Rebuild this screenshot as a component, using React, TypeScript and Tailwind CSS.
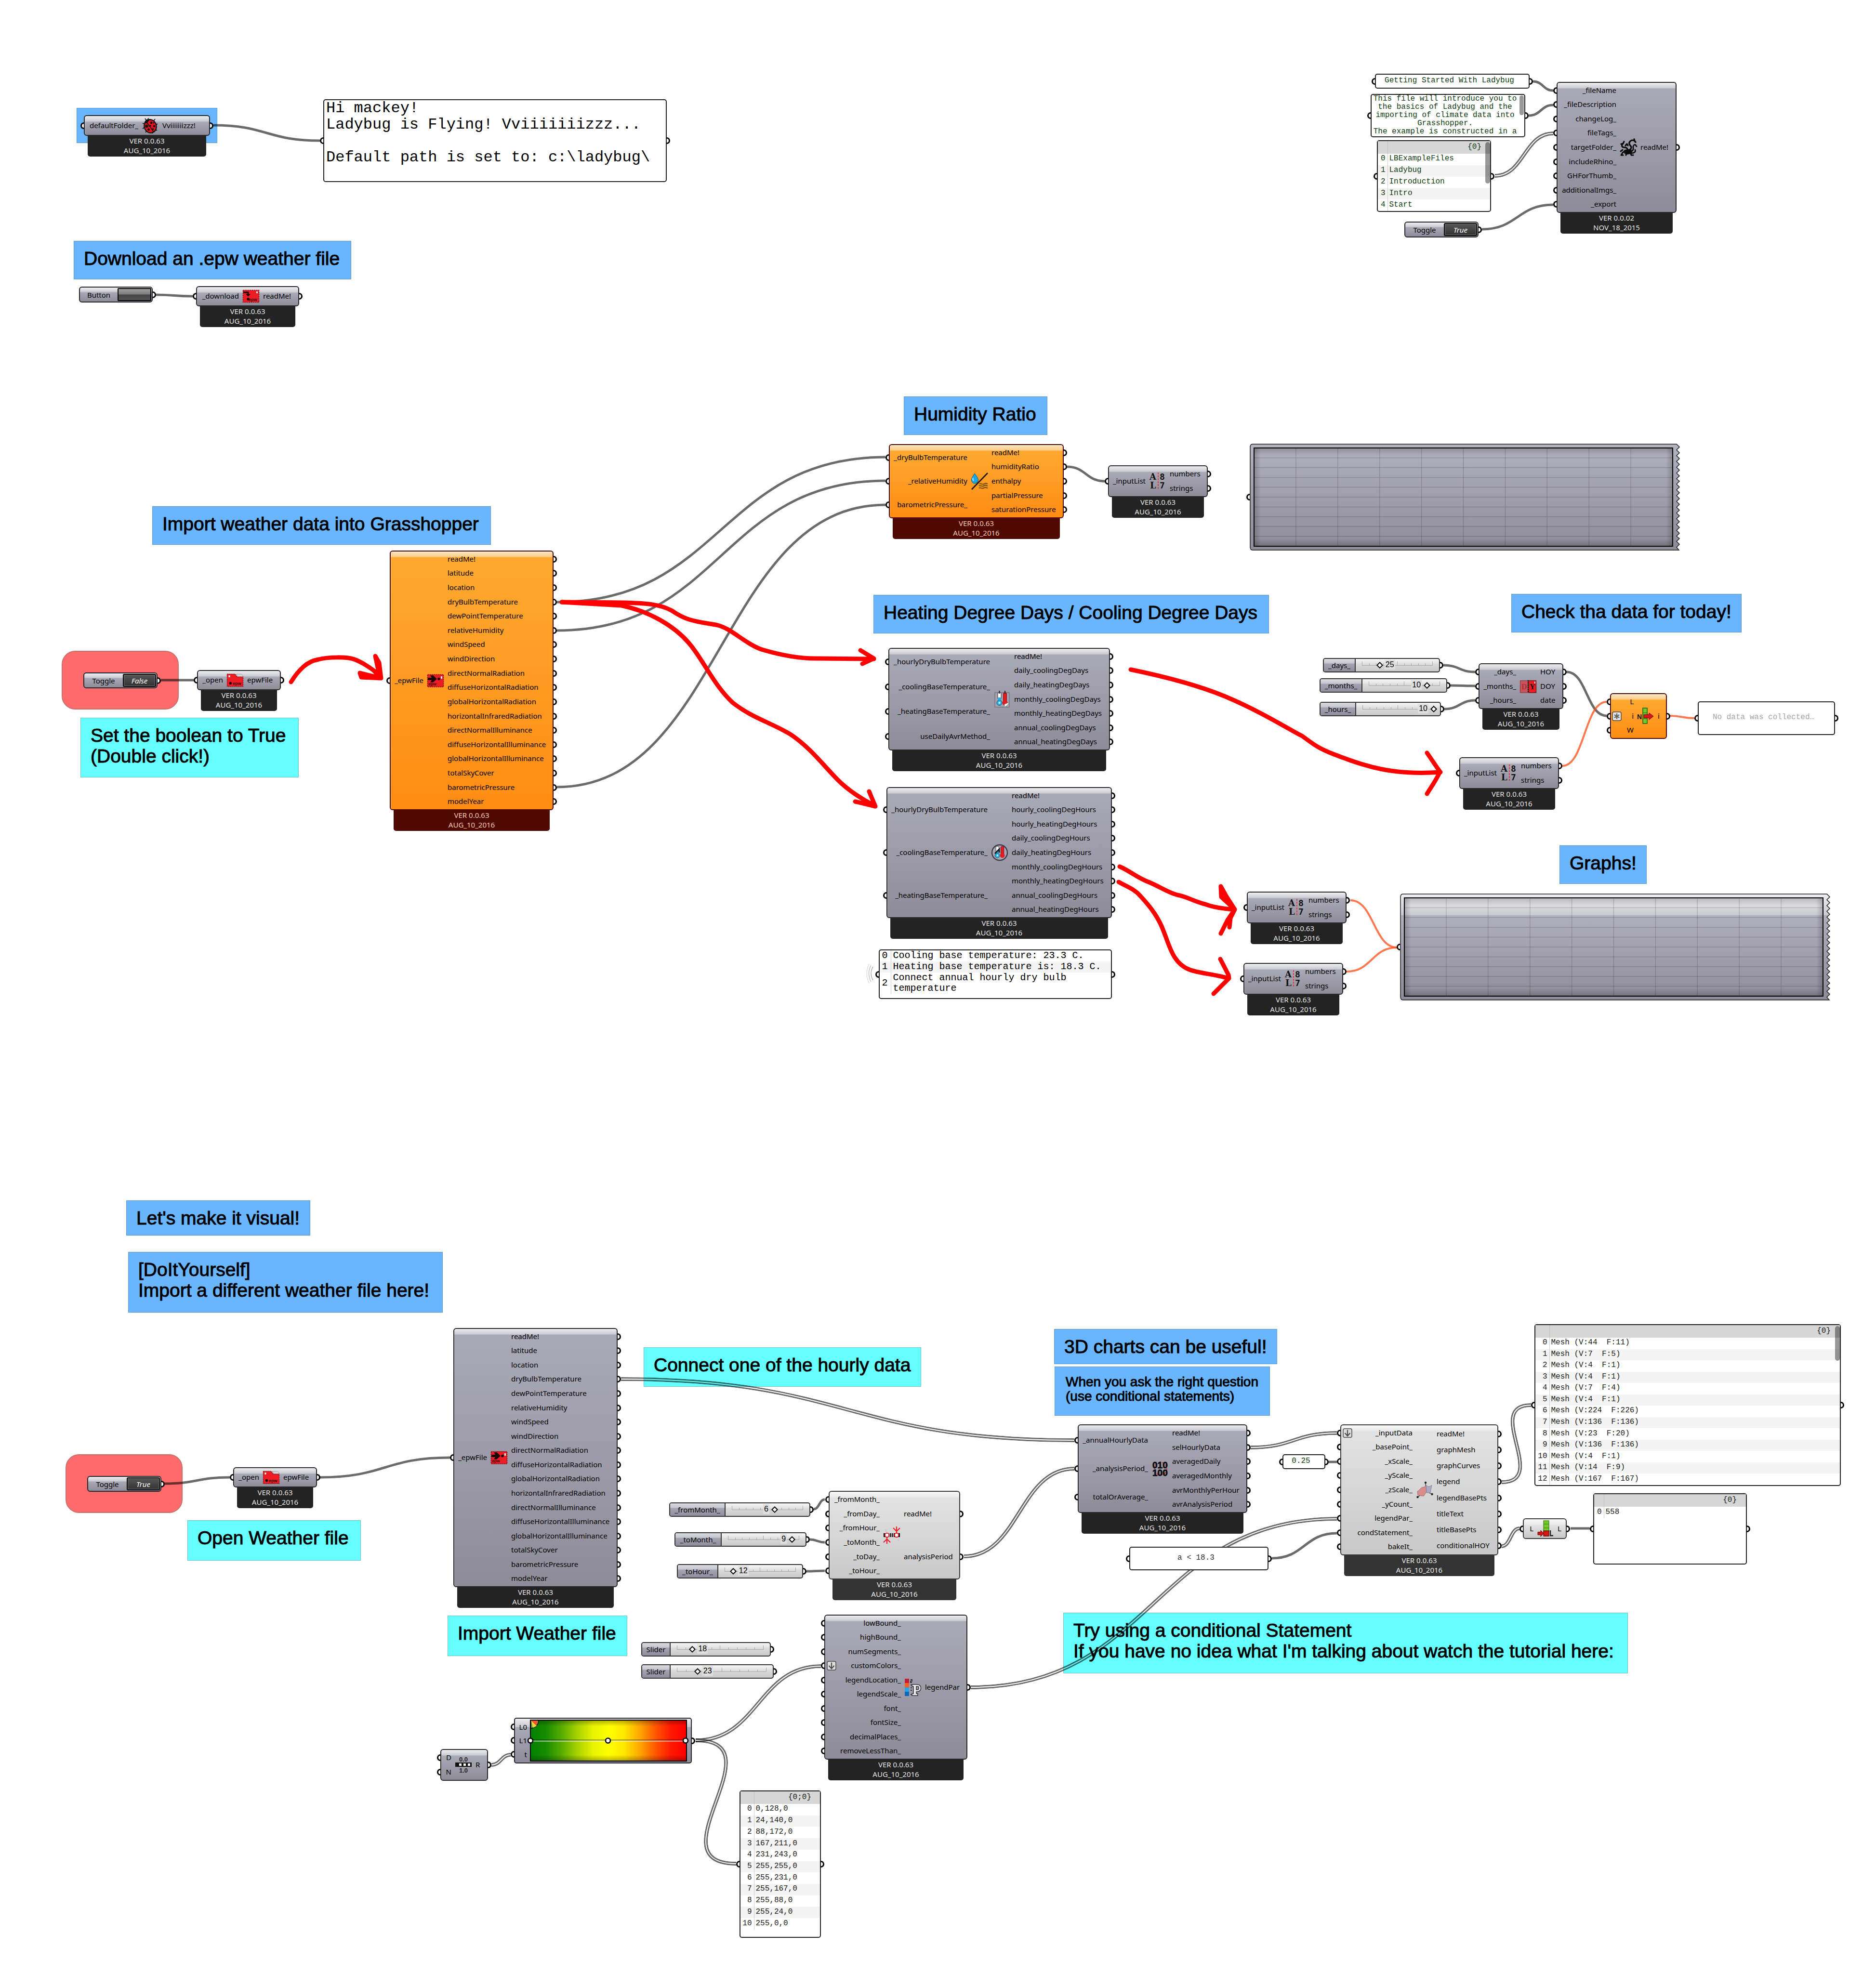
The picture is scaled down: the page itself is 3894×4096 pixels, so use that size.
import React from "react";

type Tone = "grey" | "orange" | "light";

const bodyTone: Record<Tone, string> = {
  grey: "border-[#26262b] bg-[linear-gradient(180deg,#ececf0_0px,#cacad2_11px,#aaa9b7_12px,#8e8c99_100%)]",
  orange: "border-[#4f0900] bg-[linear-gradient(180deg,#ffe6c4_0px,#ffcc85_11px,#ffa930_12px,#ff8c14_100%)]",
  light: "border-[#3a3a3a] bg-[linear-gradient(180deg,#fafafa_0px,#e9e9e9_11px,#e3e3e3_12px,#c8c8c8_100%)]",
};

const tagTone: Record<Tone, string> = {
  grey: "bg-[#232323] text-[#e6e6e6]",
  orange: "bg-[#4f0900] text-[#f6c9b4]",
  light: "bg-[#333333] text-[#ececec]",
};

const leftPort =
  "absolute -left-[9px] top-1/2 -mt-[7px] h-[14px] w-[7px] rounded-l-full border-[3px] border-r-0 border-black bg-white";
const rightPort =
  "absolute -right-[9px] top-1/2 -mt-[7px] h-[14px] w-[7px] rounded-r-full border-[3px] border-l-0 border-black bg-white";

function DownBadge() {
  return (
    <svg viewBox="0 0 20 20" className="absolute left-[3px] size-5" aria-hidden="true">
      <rect x="1" y="1" width="18" height="18" rx="3" fill="#dcdcdc" stroke="#4a4a4a" strokeWidth="1.5" />
      <path d="M10 3.5V16M4.5 10L10 16L15.5 10" fill="none" stroke="#4d4d4d" strokeWidth="2.2" />
    </svg>
  );
}

function StarBadge() {
  return (
    <svg viewBox="0 0 20 20" className="absolute left-[2px] size-5" aria-hidden="true">
      <rect x="1" y="1" width="18" height="18" rx="3" fill="#e4e4e4" stroke="#4a4a4a" strokeWidth="1.5" />
      <path d="M10 4V16M4.800 7L15.200 13M4.800 13L15.200 7" stroke="#666" strokeWidth="2.4" />
    </svg>
  );
}

type NodeProps = {
  place: string;
  body: string;
  inWidth: string;
  tone?: Tone;
  inputs: string[];
  outputs: string[];
  icon: React.ReactNode;
  tag?: [string, string] | null;
  badge?: { at: string; el: React.ReactNode };
};

function Node({ place, body, inWidth, tone = "grey", inputs, outputs, icon, tag = ["VER 0.0.63", "AUG_10_2016"], badge }: NodeProps) {
  return (
    <section className={`absolute font-['Noto_Sans',sans-serif] text-[15px] leading-5 text-black ${place}`}>
      <div
        className={`relative flex rounded-[6px] border-2 py-px shadow-[inset_0_1px_0_rgba(255,255,255,0.8),inset_1px_0_0_rgba(255,255,255,0.25)] ${bodyTone[tone]} ${body}`}
      >
        <ul className={`flex shrink-0 flex-col ${inWidth}`}>
          {inputs.map((t) => (
            <li key={t} className="relative flex flex-1 items-center justify-end whitespace-nowrap">
              <span className={leftPort} />
              {badge && badge.at === t ? badge.el : null}
              <span className="pb-0.5">{t}</span>
            </li>
          ))}
        </ul>
        <div className="mx-[7px] flex w-9 shrink-0 items-center justify-center">{icon}</div>
        <ul className="flex flex-1 flex-col">
          {outputs.map((t) => (
            <li key={t} className="relative flex flex-1 items-center whitespace-nowrap">
              <span className="pb-0.5">{t}</span>
              <span className={rightPort} />
            </li>
          ))}
        </ul>
      </div>
      {tag && (
        <footer className={`mx-2 rounded-b-[5px] pb-[3px] text-center leading-[20px] ${tagTone[tone]}`}>
          <div>{tag[0]}</div>
          <div>{tag[1]}</div>
        </footer>
      )}
    </section>
  );
}

const noteTone = {
  blue: "bg-[#69b6ff] border-[#5a9bd8]",
  cyan: "bg-[#66ffff] border-[#74c4c4]",
};

function Note({ place, tone, lines }: { place: string; tone: "blue" | "cyan"; lines: string[] }) {
  return (
    <div
      className={`absolute whitespace-nowrap border px-5 pt-[14px] font-['Liberation_Sans',Arial,sans-serif] text-[39px] leading-[43px] text-black [-webkit-text-stroke:1px_#000] ${noteTone[tone]} ${place}`}
    >
      {lines.map((l) => (
        <p key={l}>{l}</p>
      ))}
    </div>
  );
}

const panelBox = "absolute rounded-[5px] border-2 border-[#222] bg-white font-['Liberation_Mono',monospace]";

function Panel({ place, children }: { place: string; children: React.ReactNode }) {
  return (
    <div className={`${panelBox} ${place}`}>
      <span className={leftPort} />
      <span className={rightPort} />
      {children}
    </div>
  );
}

function ListPanel({
  place,
  path,
  rows,
  table,
  idx,
  head,
  scroll,
}: {
  place: string;
  path: string;
  rows: string[];
  table: string;
  idx: string;
  head: string;
  scroll?: string;
}) {
  return (
    <Panel place={place}>
      <table className={`w-full border-collapse text-[16px] leading-5 ${table}`}>
        <thead>
          <tr className="h-[26px] bg-[#d6d6d6]">
            <th className={`border-r border-[#bfbfbf] ${idx}`} />
            <th className={`pb-[3px] text-right font-normal ${head}`}>{path}</th>
          </tr>
        </thead>
        <tbody>
          {rows.map((r, i) => (
            <tr key={i} className="even:bg-[#f4f4f4]">
              <td className={`border-r border-[#cfcfcf] pb-[3px] pr-1 text-right ${idx}`}>{i}</td>
              <td className="whitespace-pre pb-[3px] pl-[3px]">{r}</td>
            </tr>
          ))}
        </tbody>
      </table>
      {scroll && <span className={`absolute right-0 top-0.5 w-[10px] rounded-full bg-black/40 ${scroll}`} />}
    </Panel>
  );
}

const capsule =
  "absolute flex rounded-[6px] border-2 border-[#26262b] bg-[linear-gradient(180deg,#ececf0_0px,#cacad2_9px,#aaa9b7_10px,#8e8c99_100%)] font-['Noto_Sans',sans-serif] text-[15px] leading-5 text-black";

function Toggle({ place, value }: { place: string; value: string }) {
  return (
    <div className={`${capsule} h-[33px] w-[154px] ${place}`}>
      <span className="flex flex-1 items-center justify-center">Toggle</span>
      <button
        type="button"
        aria-label={`Toggle ${value}`}
        className="my-px mr-px w-[69px] rounded-[3px] border-2 border-black bg-[linear-gradient(180deg,#565656,#333)] text-center italic text-white shadow-[inset_0_0_0_1px_#777]"
      >
        {value}
      </button>
      <span className={rightPort} />
    </div>
  );
}

function Slider({
  place,
  name,
  nameWidth,
  value,
  max,
  min = 0,
}: {
  place: string;
  name: string;
  nameWidth: string;
  value: number;
  max: number;
  min?: number;
}) {
  const p = ((value - min) / (max - min)) * 100;
  return (
    <label
      className={`absolute flex h-[30px] rounded-[5px] border-2 border-[#333] bg-[linear-gradient(180deg,#f6f6f6_0px,#e4e4e4_9px,#dcdcdc_10px,#c9c9c9_100%)] font-['Noto_Sans',sans-serif] text-[15px] leading-5 text-black ${place}`}
    >
      <span
        className={`flex items-center justify-center rounded-l-[3px] border-r-2 border-[#333] bg-[linear-gradient(180deg,#dcdce2_0px,#c4c4cd_9px,#a5a4b2_10px,#908e9c_100%)] ${nameWidth}`}
      >
        {name}
      </span>
      <span className="relative mx-[13px] flex-1">
        <span className="absolute inset-x-0 top-[5px] flex h-[9px] justify-between border-b border-[#a6a6a6]">
          {Array.from({ length: 11 }, (_, i) => (
            <span key={i} className={i % 5 === 0 ? "w-px bg-[#a6a6a6]" : "mt-1 w-px bg-[#a6a6a6]"} />
          ))}
        </span>
        <span
          className={`absolute top-[2px] bg-[#dfdfdf] px-0.5 font-['Liberation_Sans',Arial,sans-serif] text-[16px] leading-5 ${
            p < 50 ? "translate-x-[10px]" : "-ml-[11px] -translate-x-full"
          }`}
          style={{ left: `${p}%` }}
        >
          {value}
        </span>
        <input
          type="range"
          min={min}
          max={max}
          defaultValue={value}
          aria-label={name}
          className="absolute -left-[5px] top-[7px] m-0 h-[11px] w-[calc(100%+10px)] appearance-none bg-transparent [&::-webkit-slider-thumb]:size-[10px] [&::-webkit-slider-thumb]:rotate-45 [&::-webkit-slider-thumb]:appearance-none [&::-webkit-slider-thumb]:border-2 [&::-webkit-slider-thumb]:border-black [&::-webkit-slider-thumb]:bg-white"
        />
      </span>
      <span className={rightPort} />
    </label>
  );
}

/* ---------- icons ---------- */

const iconBox = "size-9 overflow-visible";

function LadybugIcon() {
  return (
    <svg viewBox="0 0 36 36" className={iconBox} aria-hidden="true">
      <g stroke="#111" strokeWidth="1.6" fill="none">
        <path d="M10 7L7 3M13 5L14 2M5 14L2 13M5 22L2 24M10 29L8 32M22 32L23 34M29 26L32 28M30 16L33 14M25 8L28 4" />
      </g>
      <ellipse cx="18" cy="19" rx="12.500" ry="14" fill="#e8121b" stroke="#111" strokeWidth="2.200" transform="rotate(-18 18 19)" />
      <path d="M5.500 13C7 5 12 3.500 17 5L11 13Z" fill="#111" />
      <path d="M10 10L25 31" stroke="#111" strokeWidth="1.600" />
      <g fill="#111">
        <circle cx="10.500" cy="19" r="3.200" />
        <circle cx="20" cy="12" r="2.400" />
        <circle cx="26" cy="19" r="2.200" />
        <circle cx="14.500" cy="26" r="2.400" />
        <circle cx="23.500" cy="25" r="1.800" />
        <circle cx="18" cy="18" r="1.800" />
        <circle cx="25" cy="12" r="1.500" />
      </g>
    </svg>
  );
}

function EpwText() {
  return (
    <text x="13" y="28" fontSize="9" fontWeight="700" fill="#3a0a0c" fontFamily="Liberation Sans">
      epw
    </text>
  );
}

function DownloadIcon() {
  return (
    <svg viewBox="0 0 36 36" className={iconBox} aria-hidden="true">
      <rect x="1.5" y="5.5" width="33" height="25" fill="#ee1c24" stroke="#8e1015" strokeWidth="1.5" strokeDasharray="3 1.5" />
      <path d="M2 10H12V14" fill="none" stroke="#1a0506" strokeWidth="3" />
      <path d="M7 13.500H17L12 18.500Z" fill="#1a0506" />
      <circle cx="12" cy="24" r="2.800" fill="#1a0506" />
      <rect x="29" y="8" width="3" height="4" fill="#fff" />
      <EpwText />
    </svg>
  );
}

function OpenIcon() {
  return (
    <svg viewBox="0 0 36 36" className={iconBox} aria-hidden="true">
      <path d="M1.500 5.500H18L22 11H34.500V31H1.500Z" fill="#ee1c24" stroke="#8e1015" strokeWidth="1.3" strokeDasharray="3 1.2" />
      <path d="M20 5.500H31L34.500 9V10.500H23Z" fill="#d8d3d8" stroke="#9a8f98" strokeWidth="0.8" />
      <rect x="4.500" y="8" width="3" height="4" fill="#fff" />
      <circle cx="8.500" cy="24.500" r="2.800" fill="#1a0506" />
      <EpwText />
    </svg>
  );
}

function ImportIcon() {
  return (
    <svg viewBox="0 0 36 36" className={iconBox} aria-hidden="true">
      <rect x="1.500" y="5.500" width="33" height="25.500" fill="#ee1c24" stroke="#8e1015" strokeWidth="1.5" strokeDasharray="3 1.200" />
      <path d="M2 12H10L7 7H13L21 14.500L13 21.500H7L10 17H2Z" fill="#1a0506" />
      <circle cx="25" cy="14.500" r="2.800" fill="#1a0506" />
      <rect x="29" y="9" width="3" height="5" fill="#fff" />
      <text x="3" y="28" fontSize="8.500" fontWeight="700" fill="#3a0a0c" fontFamily="Liberation Sans">
        epw
      </text>
    </svg>
  );
}

function HydraIcon() {
  return (
    <svg viewBox="0 0 36 36" className={iconBox} aria-hidden="true">
      <g fill="none" stroke="#0a0a0a" strokeLinecap="round" strokeLinejoin="round">
        <path d="M14 26C20 22 13 17 9 18C4 18 3 13 7 10L3 11M7 10L9 6M12 14L15 11L17 14" strokeWidth="3.200" />
        <path d="M18 25C26 20 25 17 21 13C18 9 21 4 26 3L31 4M31 4L30 1M31 5L33 7" strokeWidth="3.200" />
        <path d="M20 27C26 27 29 23 28 19C27 15 30 11 33 13L35 16" strokeWidth="2.800" />
        <path d="M22 29C28 31 34 28 32 23" strokeWidth="2.800" />
        <path d="M11 25L6 29L3 34H7M14 28L13 34M22 28L24 34H28M6 23L2 26" strokeWidth="3" />
      </g>
      <path d="M10 23L24 21L26 31L14 33L9 30Z" fill="#0a0a0a" />
    </svg>
  );
}

function HumidityIcon() {
  return (
    <svg viewBox="0 0 36 36" className={iconBox} aria-hidden="true">
      <path d="M8 2C13 9 15.500 12 15.500 15.500A7 7 0 0 1 1.500 15.500C1.500 12 4 8 8 2Z" fill="#19a9e8" stroke="#14506c" strokeWidth="1" />
      <path d="M5 11C4 13 4 15 6 17" stroke="#c9efff" strokeWidth="2" fill="none" />
      <path d="M35 1L2 35" stroke="#1a1208" strokeWidth="2.600" />
      <g fill="none" stroke="#7d5410" strokeWidth="2.400">
        <path d="M18 24C21 21 24 26 27 24S33 22 35 24" />
        <path d="M17 28C20 25 23 30 26 28S32 26 35 28" />
        <path d="M17 32.500C20 29.500 23 34.500 26 32.500S32 30.500 35 32.500" />
      </g>
    </svg>
  );
}

function InputListIcon() {
  return (
    <svg viewBox="0 0 36 36" className={iconBox} aria-hidden="true">
      <g fontWeight="700" fontSize="18" fill="#111">
        <text x="1" y="15" fontFamily="DejaVu Serif">A</text>
        <text x="22" y="15" fontFamily="DejaVu Sans Mono">8</text>
        <text x="2" y="33" fontFamily="DejaVu Serif">L</text>
        <text x="22" y="33" fontFamily="DejaVu Sans Mono">7</text>
      </g>
      <path d="M19 0V36" stroke="#e8343a" strokeWidth="1.800" strokeDasharray="4 2" />
    </svg>
  );
}

function Thermometers() {
  return (
    <g>
      <rect x="9" y="4" width="7" height="14" rx="2" fill="#fff" stroke="#333" strokeWidth="1" />
      <rect x="9.500" y="14" width="6" height="8" fill="#1fb4ea" />
      <circle cx="12.500" cy="25" r="5.500" fill="#1fb4ea" stroke="#1b4f66" strokeWidth="1" />
      <circle cx="12.500" cy="25" r="2" fill="#fff" />
      <rect x="20.500" y="4" width="7" height="20" rx="2.500" fill="#e31b23" stroke="#7c1014" strokeWidth="1" />
      <circle cx="24" cy="25" r="5.500" fill="#e31b23" />
    </g>
  );
}

function DegreeDaysIcon() {
  return (
    <svg viewBox="0 0 36 36" className={iconBox} aria-hidden="true">
      <path d="M3 4H33V34H3Z" fill="#a3a2b0" stroke="#777583" strokeWidth="1.500" />
      <Thermometers />
      <path d="M23 34V28L33 24L29 30Z" fill="#fff" stroke="#777" strokeWidth="0.800" />
      <path d="M12.500 0V6M24 0V6" stroke="#222" strokeWidth="2" />
    </svg>
  );
}

function DegreeHoursIcon() {
  return (
    <svg viewBox="0 0 36 36" className={iconBox} aria-hidden="true">
      <circle cx="18" cy="18" r="16" fill="#a9a8b5" stroke="#3d3c45" strokeWidth="2.400" />
      <g transform="translate(2 1.500) scale(0.900)">
        <Thermometers />
      </g>
      <path d="M8 20L17 11V18" fill="none" stroke="#111" strokeWidth="2.600" />
    </svg>
  );
}

function DoyIcon() {
  return (
    <svg viewBox="0 0 36 36" className={iconBox} aria-hidden="true">
      <rect x="1.500" y="6" width="16" height="25" fill="#c9545c" stroke="#8a3a42" strokeWidth="1.200" />
      <rect x="19" y="6" width="15.500" height="25" fill="#ee1c24" stroke="#5a0a0e" strokeWidth="1.200" />
      <path d="M18 5V32" stroke="#222" strokeWidth="2.600" strokeDasharray="2.500 2" />
      <g fontFamily="Liberation Serif" fontWeight="700" fontSize="16">
        <text x="4" y="24" fill="#a8323a">D</text>
        <text x="21" y="24" fill="#111">Y</text>
      </g>
      <rect x="31" y="8" width="2" height="4" fill="#fff" />
    </svg>
  );
}

function ItemIcon() {
  return (
    <svg viewBox="0 0 36 36" className={iconBox} aria-hidden="true">
      <rect x="12" y="1" width="9" height="32" fill="#6ccc2a" stroke="#27630c" strokeWidth="1.600" />
      <path d="M12 11H21M12 23H21" stroke="#27630c" strokeWidth="1.200" />
      <text x="0" y="24" fontFamily="Liberation Sans" fontWeight="700" fontSize="14" fill="#111">
        N
      </text>
      <path d="M14 14.500H25V11L34 18L25 25V21.500H14Z" fill="#d81414" stroke="#7a0808" strokeWidth="1" />
    </svg>
  );
}

function SelectDataIcon() {
  return (
    <svg viewBox="0 0 36 36" className={iconBox} aria-hidden="true">
      <circle cx="19" cy="18" r="13" fill="none" stroke="#e2262d" strokeWidth="1.800" strokeDasharray="5 3" />
      <g fontFamily="Liberation Sans" fontWeight="700" fontSize="19" fill="#0c0c0c" stroke="#0c0c0c" strokeWidth="0.800">
        <text x="2" y="17">010</text>
        <text x="2" y="33">100</text>
      </g>
    </svg>
  );
}

function PeriodIcon() {
  return (
    <svg viewBox="0 0 36 36" className={iconBox} aria-hidden="true">
      <rect x="1" y="14" width="34" height="8" fill="#111" />
      <path d="M13 14V22M17 14V22M21 14V22" stroke="#ddd" strokeWidth="1.600" />
      <g fill="none" stroke="#ea1f27" strokeWidth="2.200">
        <path d="M28 0V13M21 3L28 10L35 3" />
        <path d="M8 36V23M1 33L8 26L15 33" />
      </g>
      <circle cx="28" cy="18" r="4.200" fill="#fff" stroke="#ea1f27" strokeWidth="2" />
      <circle cx="8" cy="18" r="4.200" fill="#fff" stroke="#ea1f27" strokeWidth="2" />
      <path d="M4 6H8V11H4ZM30 27H34V30H30Z" fill="#cfcaca" />
    </svg>
  );
}

function LegendIcon() {
  return (
    <svg viewBox="0 0 36 36" className={iconBox} aria-hidden="true">
      <rect x="1" y="0" width="9" height="9" fill="#c41f3a" />
      <rect x="1" y="9" width="9" height="9" fill="#f4601f" />
      <rect x="1" y="18" width="9" height="9" fill="#26a5e6" />
      <rect x="1" y="27" width="9" height="9" fill="#0f68b8" />
      <path d="M13 2H16V5H13V8H16M13 13H17M13 19H16M13 24H16M13 33H17" stroke="#33323a" strokeWidth="1.800" fill="none" />
      <path
        d="M16 12H27C37 12 37 27 27 27H25V31H28V35H16V31H19V16H16ZM25 16V23H27C31 23 31 16 27 16Z"
        fill="#eeeef0"
        stroke="#33323a"
        strokeWidth="1.600"
        fillRule="evenodd"
      />
    </svg>
  );
}

function ChartIcon() {
  return (
    <svg viewBox="0 0 36 36" className={iconBox} aria-hidden="true">
      <path d="M20 3V20M20 20L4 33M20 20L33 27" stroke="#3a3a3a" strokeWidth="1.400" />
      <circle cx="20" cy="3" r="2.200" fill="#222" />
      <circle cx="3.500" cy="33" r="2.200" fill="#222" />
      <circle cx="33.500" cy="27" r="2.200" fill="#222" />
      <path d="M3 21C8 20 8 12 18 12L21 8L22 22L16 31L4 29Z" fill="#d98c8c" stroke="#a05a5a" strokeWidth="0.800" />
      <path d="M21 8C26 13 29 11 33 8L30 24L22 24Z" fill="#a9a9c4" stroke="#77779c" strokeWidth="0.800" />
    </svg>
  );
}

function LengthIcon() {
  return (
    <svg viewBox="0 0 36 36" className={iconBox} aria-hidden="true">
      <rect x="14" y="1" width="11" height="23" fill="#74c92c" stroke="#3c7d14" strokeWidth="1.200" />
      <path d="M14 8H25M14 16H25" stroke="#3c7d14" strokeWidth="1" />
      <rect x="14" y="22" width="11" height="11" fill="#d81414" stroke="#5a0606" strokeWidth="1.200" />
      <path d="M2 24.500H8V21L14 27.500L8 34V30.500H2Z" fill="#d81414" stroke="#5a0606" strokeWidth="1" />
      <path d="M28 21V32H34" fill="none" stroke="#222" strokeWidth="2.400" />
    </svg>
  );
}

function RangeIcon() {
  return (
    <svg viewBox="0 0 36 36" className={iconBox} aria-hidden="true">
      <g fontFamily="Liberation Sans" fontWeight="700" fontSize="13" fill="#222">
        <text x="9" y="11">0.0</text>
        <text x="9" y="34">1.0</text>
      </g>
      <rect x="1" y="13" width="34" height="9" fill="#111" />
      <path d="M9 15H14V20H9ZM18 15H23V20H18ZM27 15H32V20H27Z" fill="#fff" />
    </svg>
  );
}

/* ---------- quick graph ---------- */

function QuickGraph({ place, lit }: { place: string; lit: boolean }) {
  const id = lit ? "lit" : "flat";
  const teeth = Array.from({ length: 18 }, (_, i) => `L892 ${Math.round(i * 11.9 + 7)} L886 ${Math.round(i * 11.9 + 13)}`).join(" ");
  return (
    <div className={`absolute h-[222px] w-[892px] ${place}`}>
      <span className="absolute -left-[7px] top-1/2 -mt-[7px] h-[14px] w-[7px] rounded-l-full border-[3px] border-r-0 border-black bg-white" />
      <svg viewBox="0 0 892 222" className="size-full overflow-visible" aria-label="Quick graph">
        <defs>
          <linearGradient id={`body-${id}`} x1="0" y1="0" x2="0" y2="1">
            <stop offset="0" stopColor={lit ? "#ededef" : "#b4b3c0"} />
            <stop offset="0.200" stopColor={lit ? "#cacad2" : "#aaa9b7"} />
            <stop offset="0.200" stopColor={lit ? "#b0afbc" : "#aaa9b7"} />
            <stop offset="1" stopColor="#8e8c99" />
          </linearGradient>
          <linearGradient id={`v-${id}`} x1="0" y1="0" x2="0" y2="1">
            <stop offset="0" stopColor="#000" stopOpacity="0.200" />
            <stop offset="0.080" stopColor="#000" stopOpacity="0" />
            <stop offset="0.920" stopColor="#000" stopOpacity="0" />
            <stop offset="1" stopColor="#000" stopOpacity="0.200" />
          </linearGradient>
          <linearGradient id={`h-${id}`} x1="0" y1="0" x2="1" y2="0">
            <stop offset="0" stopColor="#000" stopOpacity="0.200" />
            <stop offset="0.016" stopColor="#000" stopOpacity="0" />
            <stop offset="0.984" stopColor="#000" stopOpacity="0" />
            <stop offset="1" stopColor="#000" stopOpacity="0.200" />
          </linearGradient>
        </defs>
        <path d={`M6 1 H886 ${teeth} L891 221 H6 Q1 221 1 214 V8 Q1 1 6 1Z`} fill={`url(#body-${id})`} stroke="#222" strokeWidth="1.500" />
        <rect x="9" y="9" width="869" height="204" fill={`url(#v-${id})`} />
        <rect x="9" y="9" width="869" height="204" fill={`url(#h-${id})`} stroke="#000" strokeWidth="2" />
        <g stroke="#000" strokeOpacity="0.160" strokeWidth="1.500">
          {Array.from({ length: 9 }, (_, i) => (
            <path key={i} d={`M${9 + (i + 1) * 86.9} 10V212M10 ${9 + (i + 1) * 20.4}H877`} />
          ))}
        </g>
      </svg>
    </div>
  );
}

/* ---------- wires ---------- */

type WireData = { a: [number, number]; b: [number, number]; kind?: "single" | "double" | "hot"; pull?: number };

const wires: WireData[] = [
  { a: [443, 260], b: [664, 292] },
  { a: [324, 612], b: [400, 615] },
  { a: [3182, 169], b: [3224, 188] },
  { a: [3173, 240], b: [3224, 218] },
  { a: [3103, 365], b: [3224, 277], kind: "double" },
  { a: [3076, 476], b: [3224, 425] },
  { a: [334, 1412], b: [402, 1412] },
  { a: [1156, 1250], b: [1838, 949] },
  { a: [1156, 1309], b: [1838, 998] },
  { a: [1156, 1634], b: [1838, 1048] },
  { a: [2215, 969], b: [2293, 999] },
  { a: [2996, 1381], b: [3062, 1395] },
  { a: [3011, 1423], b: [3062, 1424] },
  { a: [2998, 1472], b: [3062, 1454] },
  { a: [3252, 1395], b: [3335, 1486] },
  { a: [3243, 1590], b: [3335, 1457], kind: "hot" },
  { a: [3466, 1486], b: [3517, 1491], kind: "hot" },
  { a: [2803, 1869], b: [2900, 1967], kind: "hot" },
  { a: [2795, 2017], b: [2900, 1967], kind: "hot" },
  { a: [341, 3080], b: [477, 3067] },
  { a: [664, 3067], b: [934, 3026] },
  { a: [1289, 2863], b: [2230, 2990], kind: "double" },
  { a: [1689, 3133], b: [1712, 3113] },
  { a: [1681, 3196], b: [1712, 3202] },
  { a: [1674, 3262], b: [1712, 3261] },
  { a: [2001, 3231], b: [2230, 3049], kind: "double" },
  { a: [2596, 3005], b: [2775, 2975], kind: "double" },
  { a: [2758, 3035], b: [2775, 3035] },
  { a: [2640, 3235], b: [2775, 3183] },
  { a: [2015, 3503], b: [2775, 3153], kind: "double" },
  { a: [3117, 3077], b: [3178, 2917], kind: "double", pull: 100 },
  { a: [3117, 3210], b: [3154, 3173], kind: "double" },
  { a: [3260, 3173], b: [3300, 3173] },
  { a: [1020, 3664], b: [1060, 3643], kind: "double" },
  { a: [1444, 3613], b: [1704, 3459], kind: "double" },
  { a: [1444, 3613], b: [1528, 3869], kind: "double", pull: 176 },
];

function Wire({ w, id }: { w: WireData; id: string }) {
  const [x1, y1] = w.a;
  const [x2, y2] = w.b;
  const pull = w.pull ?? (x2 - x1) / 2;
  const d = `M${x1} ${y1}C${x1 + pull} ${y1} ${x2 - pull} ${y2} ${x2} ${y2}`;
  if (w.kind === "double") {
    return (
      <g>
        <mask id={id} maskUnits="userSpaceOnUse" x="0" y="0" width="3894" height="4096">
          <path d={d} fill="none" stroke="#fff" strokeWidth="8" />
          <path d={d} fill="none" stroke="#000" strokeWidth="2" />
        </mask>
        <path d={d} fill="none" stroke="#000" strokeOpacity="0.580" strokeWidth="8" mask={`url(#${id})`} />
      </g>
    );
  }
  return (
    <path
      d={d}
      fill="none"
      stroke={w.kind === "hot" ? "#ff4a14" : "#000"}
      strokeOpacity={w.kind === "hot" ? 0.75 : 0.58}
      strokeWidth={w.kind === "hot" ? 4 : 5}
    />
  );
}

const sketches = [
  "M604 1416C613 1401 620 1393 630 1384C640 1375 650 1371 661 1369C680 1364 720 1363 736 1369C750 1374 768 1386 777 1393L790 1408M779 1362L787 1376L791 1408L786 1395L779 1362M747 1397L750 1406L791 1408L770 1403Z",
  "M1166 1250L1290 1251C1340 1252 1370 1254 1395 1268C1430 1292 1450 1290 1490 1298C1520 1306 1545 1335 1580 1348C1620 1360 1660 1368 1700 1367L1814 1368M1786 1350L1814 1367L1790 1378",
  "M1166 1250L1290 1257C1350 1270 1400 1300 1430 1335C1460 1370 1480 1420 1520 1458C1560 1490 1600 1500 1640 1524C1680 1550 1710 1590 1740 1620C1760 1640 1790 1660 1815 1672M1804 1643L1817 1674L1775 1664",
  "M2347 1390C2410 1403 2480 1420 2541 1445C2620 1478 2680 1517 2703 1528C2730 1548 2740 1555 2769 1566C2800 1578 2850 1597 2902 1602C2930 1605 2960 1605 2990 1603M2962 1563C2972 1577 2980 1590 2989 1602C2982 1618 2972 1632 2962 1648",
  "M2324 1799C2345 1808 2362 1823 2384 1831C2410 1842 2425 1853 2444 1858C2460 1860 2480 1872 2501 1877C2520 1884 2540 1887 2563 1888M2534 1840L2535 1862L2563 1888L2545 1860L2534 1840M2563 1888L2548 1910L2534 1938M2563 1888L2554 1906L2552 1925",
  "M2322 1831C2340 1841 2355 1846 2367 1860C2390 1885 2405 1905 2416 1935C2428 1965 2435 2000 2469 2013C2490 2021 2520 2022 2550 2031M2533 1991L2550 2024L2551 2031L2519 2063L2540 2042",
];

export default function App() {
  return (
    <main className="relative min-h-screen w-full overflow-hidden bg-white">
      {/* groups and notes */}
      <div className="absolute left-[159px] top-[224px] h-[73px] w-[292px] border border-[#5a9bd8] bg-[#69b6ff]" />
      <div className="absolute left-[128px] top-[1351px] h-[122px] w-[243px] rounded-[28px] border-2 border-[#c86f6f] bg-[#ff6b6b]" />
      <div className="absolute left-[136px] top-[3019px] h-[122px] w-[243px] rounded-[28px] border-2 border-[#c86f6f] bg-[#ff6b6b]" />

      <Note place="left-[153px] top-[500px] w-[576px] pb-[21px]" tone="blue" lines={["Download an .epw weather file"]} />
      <Note place="left-[316px] top-[1051px] w-[703px] pb-[21px]" tone="blue" lines={["Import weather data into Grasshopper"]} />
      <Note place="left-[1876px] top-[823px] w-[298px] pb-[21px]" tone="blue" lines={["Humidity Ratio"]} />
      <Note place="left-[1813px] top-[1235px] w-[821px] pb-[21px]" tone="blue" lines={["Heating Degree Days / Cooling Degree Days"]} />
      <Note place="left-[3137px] top-[1233px] w-[478px] pb-[21px]" tone="blue" lines={["Check tha data for today!"]} />
      <Note place="left-[3237px] top-[1755px] w-[181px] pb-[21px]" tone="blue" lines={["Graphs!"]} />
      <Note place="left-[262px] top-[2492px] w-[382px] pb-[14px]" tone="blue" lines={["Let's make it visual!"]} />
      <Note place="left-[266px] top-[2599px] w-[653px] pb-6" tone="blue" lines={["[DoItYourself]", "Import a different weather file here!"]} />
      <Note place="left-[2188px] top-[2759px] w-[463px] pb-[14px]" tone="blue" lines={["3D charts can be useful!"]} />
      <div className="absolute left-[2189px] top-[2837px] w-[447px] whitespace-nowrap border border-[#5a9bd8] bg-[#69b6ff] px-[22px] pb-6 pt-4 font-['Liberation_Sans',Arial,sans-serif] text-[28px] leading-[30px] text-black [-webkit-text-stroke:1px_#000]">
        <p>When you ask the right question</p>
        <p>(use conditional statements)</p>
      </div>
      <Note place="left-[167px] top-[1490px] w-[453px] pb-[22px]" tone="cyan" lines={["Set the boolean to True", "(Double click!)"]} />
      <Note place="left-[389px] top-[3156px] w-[360px] pb-[25px]" tone="cyan" lines={["Open Weather file"]} />
      <Note place="left-[929px] top-[3354px] w-[373px] pb-[25px]" tone="cyan" lines={["Import Weather file"]} />
      <Note place="left-[1336px] top-[2797px] w-[576px] pb-[23px]" tone="cyan" lines={["Connect one of the hourly data"]} />
      <Note
        place="left-[2207px] top-[3348px] w-[1172px] pb-6"
        tone="cyan"
        lines={["Try using a conditional Statement", "If you have no idea what I'm talking about watch the tutorial here:"]}
      />

      {/* wires and sketched arrows */}
      <svg className="pointer-events-none absolute inset-0 size-full overflow-visible" aria-hidden="true">
        {wires.map((w, i) => (
          <Wire key={i} w={w} id={`wire-${i}`} />
        ))}
        <g fill="none" stroke="#ff0000" strokeWidth="9" strokeLinecap="round" strokeLinejoin="round">
          {sketches.map((d) => (
            <path key={d} d={d} />
          ))}
        </g>
        <g fill="none" stroke="#999" strokeWidth="1.200">
          <path d="M1812 2007Q1804 2021 1812 2035" />
          <path d="M1808 2004Q1799 2021 1808 2038" strokeOpacity="0.700" />
          <path d="M1804 2001Q1794 2021 1804 2041" strokeOpacity="0.400" />
        </g>
      </svg>

      {/* top left */}
      <Node place="left-[174px] top-[239px] w-[262px]" body="h-[43px]" inWidth="w-[111px]" inputs={["defaultFolder_"]} outputs={["Vviiiiiiizzz!"]} icon={<LadybugIcon />} />
      <Panel place="left-[671px] top-[206px] w-[713px] h-[172px]">
        <pre className="pl-1 font-['Liberation_Mono',monospace] text-[32px] leading-[34px] text-black">
          {"Hi mackey!\nLadybug is Flying! Vviiiiiiizzz...\n\nDefault path is set to: c:\\ladybug\\"}
        </pre>
      </Panel>
      <div className={`${capsule} left-[164px] top-[595px] h-[33px] w-[153px]`}>
        <span className="flex flex-1 items-center justify-center">Button</span>
        <button
          type="button"
          aria-label="Button"
          className="my-px mr-px w-[70px] rounded-[2px] border-2 border-black bg-[linear-gradient(180deg,#a0a0a0_0%,#7a7a7a_48%,#444_52%,#555_100%)]"
        />
        <span className={rightPort} />
      </div>
      <Node place="left-[407px] top-[594px] w-[214px]" body="h-[42px]" inWidth="w-[87px]" inputs={["_download"]} outputs={["readMe!"]} icon={<DownloadIcon />} />

      {/* top right */}
      <Panel place="left-[2854px] top-[153px] w-[321px] h-[31px]">
        <p className="pr-3 text-center text-[16px] leading-[24px] text-[#123c12]">Getting Started With Ladybug</p>
      </Panel>
      <Panel place="left-[2845px] top-[195px] w-[321px] h-[90px]">
        <p className="whitespace-pre pr-3 text-center text-[16px] leading-[17px] text-[#123c12]">
          {"This file will introduce you to\nthe basics of Ladybug and the\nimporting of climate data into\nGrasshopper.\nThe example is constructed in a"}
        </p>
        <span className="absolute right-px top-px h-[41px] w-[9px] rounded-full bg-[#999]" />
      </Panel>
      <ListPanel
        place="left-[2858px] top-[291px] w-[237px] h-[149px] text-[#123c12]"
        path="{0}"
        table="h-full"
        idx="w-[20px]"
        head="pr-[18px]"
        scroll="h-[86px]"
        rows={["LBExampleFiles", "Ladybug", "Introduction", "Intro", "Start"]}
      />
      <Toggle place="left-[2915px] top-[460px]" value="True" />
      <Node
        place="left-[3231px] top-[170px] w-[249px]"
        body="h-[272px]"
        inWidth="w-[122px]"
        inputs={["_fileName", "_fileDescription", "changeLog_", "fileTags_", "targetFolder_", "includeRhino_", "GHForThumb_", "additionalImgs_", "_export"]}
        outputs={["readMe!"]}
        icon={<HydraIcon />}
        tag={["VER 0.0.02", "NOV_18_2015"]}
      />

      {/* weather import */}
      <Toggle place="left-[173px] top-[1396px]" value="False" />
      <Node place="left-[409px] top-[1391px] w-[174px]" body="h-[42px]" inWidth="w-[52px]" inputs={["_open"]} outputs={["epwFile"]} icon={<OpenIcon />} />
      <Node place="left-[809px] top-[1143px] w-[340px]" body="h-[539px]" inWidth="w-[68px]" tone="orange" inputs={["_epwFile"]} outputs={epwOutputs} icon={<ImportIcon />} />

      {/* humidity */}
      <Node
        place="left-[1845px] top-[922px] w-[363px]"
        body="h-[154px]"
        inWidth="w-[161px]"
        tone="orange"
        inputs={["_dryBulbTemperature", "_relativeHumidity", "barometricPressure_"]}
        outputs={["readMe!", "humidityRatio", "enthalpy", "partialPressure", "saturationPressure"]}
        icon={<HumidityIcon />}
      />
      <InputList place="left-[2300px] top-[966px]" />
      <QuickGraph place="left-[2594px] top-[921px]" lit={false} />

      {/* degree days */}
      <Node
        place="left-[1844px] top-[1345px] w-[460px]"
        body="h-[213px]"
        inWidth="w-[209px]"
        inputs={["_hourlyDryBulbTemperature", "_coolingBaseTemperature_", "_heatingBaseTemperature_", "useDailyAvrMethod_"]}
        outputs={["readMe!", "daily_coolingDegDays", "daily_heatingDegDays", "monthly_coolingDegDays", "monthly_heatingDegDays", "annual_coolingDegDays", "annual_heatingDegDays"]}
        icon={<DegreeDaysIcon />}
      />
      <Node
        place="left-[1840px] top-[1634px] w-[468px]"
        body="h-[272px]"
        inWidth="w-[208px]"
        inputs={["_hourlyDryBulbTemperature", "_coolingBaseTemperature_", "_heatingBaseTemperature_"]}
        outputs={[
          "readMe!",
          "hourly_coolingDegHours",
          "hourly_heatingDegHours",
          "daily_coolingDegHours",
          "daily_heatingDegHours",
          "monthly_coolingDegHours",
          "monthly_heatingDegHours",
          "annual_coolingDegHours",
          "annual_heatingDegHours",
        ]}
        icon={<DegreeHoursIcon />}
      />
      <Panel place="left-[1824px] top-[1971px] w-[484px] h-[103px]">
        <table className="w-full border-collapse text-[20px] leading-[22px] text-black">
          <tbody>
            {["Cooling base temperature: 23.3 C.", "Heating base temperature is: 18.3 C.", "Connect annual hourly dry bulb\ntemperature"].map((r, i) => (
              <tr key={r} className="even:bg-[#f4f4f4]">
                <td className="w-[23px] border-r border-[#cfcfcf] pb-px pr-1.5 text-right">{i}</td>
                <td className="whitespace-pre pb-px pl-1">{r}</td>
              </tr>
            ))}
          </tbody>
        </table>
      </Panel>
      <InputList place="left-[2588px] top-[1851px]" />
      <InputList place="left-[2581px] top-[1999px]" />
      <QuickGraph place="left-[2906px] top-[1855px]" lit />

      {/* data for today */}
      <Slider place="left-[2746px] top-[1366px] w-[243px]" name="_days_" nameWidth="w-[66px]" value={25} max={100} />
      <Slider place="left-[2739px] top-[1408px] w-[265px]" name="_months_" nameWidth="w-[87px]" value={10} min={1} max={12} />
      <Slider place="left-[2739px] top-[1457px] w-[252px]" name="_hours_" nameWidth="w-[74px]" value={10} max={10} />
      <Node place="left-[3069px] top-[1377px] w-[176px]" body="h-[95px]" inWidth="w-[76px]" inputs={["_days_", "_months_", "_hours_"]} outputs={["HOY", "DOY", "date"]} icon={<DoyIcon />} />
      <InputList place="left-[3029px] top-[1572px]" />
      <Node
        place="left-[3342px] top-[1439px] w-[118px]"
        body="h-[95px]"
        inWidth="w-[47px]"
        tone="orange"
        inputs={["L", "i", "W"]}
        outputs={["i"]}
        icon={<ItemIcon />}
        tag={null}
        badge={{ at: "i", el: <StarBadge /> }}
      />
      <Panel place="left-[3524px] top-[1456px] w-[285px] h-[70px]">
        <p className="pr-3 text-center text-[16px] leading-[62px] text-[#a6a6a6]">No data was collected…</p>
      </Panel>

      {/* second import */}
      <Toggle place="left-[181px] top-[3064px]" value="True" />
      <Node place="left-[484px] top-[3046px] w-[174px]" body="h-[42px]" inWidth="w-[52px]" inputs={["_open"]} outputs={["epwFile"]} icon={<OpenIcon />} />
      <Node place="left-[941px] top-[2757px] w-[341px]" body="h-[538px]" inWidth="w-[68px]" inputs={["_epwFile"]} outputs={epwOutputs} icon={<ImportIcon />} />

      {/* analysis period */}
      <Slider place="left-[1389px] top-[3119px] w-[293px]" name="_fromMonth_" nameWidth="w-[115px]" value={6} max={10} />
      <Slider place="left-[1400px] top-[3181px] w-[274px]" name="_toMonth_" nameWidth="w-[96px]" value={9} max={10} />
      <Slider place="left-[1405px] top-[3247px] w-[262px]" name="_toHour_" nameWidth="w-[84px]" value={12} max={100} />
      <Node
        place="left-[1720px] top-[3095px] w-[273px]"
        body="h-[184px]"
        inWidth="w-[104px]"
        tone="light"
        inputs={["_fromMonth_", "_fromDay_", "_fromHour_", "_toMonth_", "_toDay_", "_toHour_"]}
        outputs={["readMe!", "analysisPeriod"]}
        icon={<PeriodIcon />}
      />
      <Node
        place="left-[2237px] top-[2957px] w-[352px]"
        body="h-[184px]"
        inWidth="w-[144px]"
        inputs={["_annualHourlyData", "_analysisPeriod_", "totalOrAverage_"]}
        outputs={["readMe!", "selHourlyData", "averagedDaily", "averagedMonthly", "avrMonthlyPerHour", "avrAnalysisPeriod"]}
        icon={<SelectDataIcon />}
      />
      <Panel place="left-[2662px] top-[3019px] w-[89px] h-[31px]">
        <p className="pr-3 text-center text-[16px] leading-[24px] text-[#123c12]">0.25</p>
      </Panel>
      <Panel place="left-[2344px] top-[3211px] w-[289px] h-[49px]">
        <p className="pr-3 text-center text-[16px] leading-[42px] text-[#333]">a &lt; 18.3</p>
      </Panel>
      <Node
        place="left-[2782px] top-[2957px] w-[328px]"
        body="h-[272px]"
        inWidth="w-[148px]"
        tone="light"
        inputs={["_inputData", "_basePoint_", "_xScale_", "_yScale_", "_zScale_", "_yCount_", "legendPar_", "condStatement_", "bakeIt_"]}
        outputs={["readMe!", "graphMesh", "graphCurves", "legend", "legendBasePts", "titleText", "titleBasePts", "conditionalHOY"]}
        icon={<ChartIcon />}
        badge={{ at: "_inputData", el: <DownBadge /> }}
      />
      <ListPanel
        place="left-[3185px] top-[2749px] w-[636px] h-[336px] text-[#222]"
        path="{0}"
        table="h-full"
        idx="w-[29px]"
        head="pr-[19px]"
        scroll="h-[72px]"
        rows={[
          "Mesh (V:44  F:11)",
          "Mesh (V:7  F:5)",
          "Mesh (V:4  F:1)",
          "Mesh (V:4  F:1)",
          "Mesh (V:7  F:4)",
          "Mesh (V:4  F:1)",
          "Mesh (V:224  F:226)",
          "Mesh (V:136  F:136)",
          "Mesh (V:23  F:20)",
          "Mesh (V:136  F:136)",
          "Mesh (V:4  F:1)",
          "Mesh (V:14  F:9)",
          "Mesh (V:167  F:167)",
        ]}
      />
      <Node place="left-[3161px] top-[3152px] w-[91px]" body="h-[43px]" inWidth="w-[20px]" tone="light" inputs={["L"]} outputs={["L"]} icon={<LengthIcon />} tag={null} />
      <ListPanel place="left-[3307px] top-[3100px] w-[319px] h-[148px] text-[#222]" path="{0}" table="h-[50px]" idx="w-[20px]" head="pr-[19px]" rows={["558"]} />

      {/* legend parameters */}
      <Slider place="left-[1331px] top-[3409px] w-[269px]" name="Slider" nameWidth="w-[59px]" value={18} max={100} />
      <Slider place="left-[1331px] top-[3455px] w-[275px]" name="Slider" nameWidth="w-[59px]" value={23} max={100} />
      <Node
        place="left-[1711px] top-[3352px] w-[297px]"
        body="h-[301px]"
        inWidth="w-[157px]"
        inputs={["lowBound_", "highBound_", "numSegments_", "customColors_", "legendLocation_", "legendScale_", "font_", "fontSize_", "decimalPlaces_", "removeLessThan_"]}
        outputs={["legendPar"]}
        icon={<LegendIcon />}
        badge={{ at: "customColors_", el: <DownBadge /> }}
      />
      <Node place="left-[914px] top-[3631px] w-[99px]" body="h-[66px]" inWidth="w-[21px]" inputs={["D", "N"]} outputs={["R"]} icon={<RangeIcon />} tag={null} />
      <section className="absolute left-[1067px] top-[3566px] flex h-[95px] w-[369px] rounded-[5px] border-2 border-[#26262b] bg-[linear-gradient(180deg,#ececf0_0px,#cacad2_17px,#aaa9b7_18px,#8e8c99_100%)] py-[3px] font-['Noto_Sans',sans-serif] text-[15px] leading-5">
        <ul className="flex w-[32px] flex-col">
          {["L0", "L1", "t"].map((t) => (
            <li key={t} className="relative flex flex-1 items-center justify-end pr-[7px]">
              <span className={leftPort} />
              {t}
            </li>
          ))}
        </ul>
        <svg viewBox="0 0 324 85" className="h-[85px] w-[324px] overflow-visible" aria-label="Gradient">
          <defs>
            <linearGradient id="ramp" x1="0" y1="0" x2="1" y2="0">
              <stop offset="0" stopColor="#008000" />
              <stop offset="0.100" stopColor="#188c00" />
              <stop offset="0.200" stopColor="#58ac00" />
              <stop offset="0.300" stopColor="#a7d300" />
              <stop offset="0.400" stopColor="#e7f300" />
              <stop offset="0.500" stopColor="#ffff00" />
              <stop offset="0.600" stopColor="#ffe700" />
              <stop offset="0.700" stopColor="#ffa700" />
              <stop offset="0.800" stopColor="#ff5800" />
              <stop offset="0.900" stopColor="#ff1800" />
              <stop offset="1" stopColor="#ff0000" />
            </linearGradient>
            <linearGradient id="rampShade" x1="0" y1="0" x2="0" y2="1">
              <stop offset="0" stopColor="#000" stopOpacity="0.300" />
              <stop offset="0.150" stopColor="#000" stopOpacity="0" />
              <stop offset="0.850" stopColor="#000" stopOpacity="0" />
              <stop offset="1" stopColor="#000" stopOpacity="0.300" />
            </linearGradient>
          </defs>
          <rect width="324" height="85" fill="url(#ramp)" />
          <rect width="324" height="85" fill="url(#rampShade)" stroke="#000" strokeWidth="2" />
          <path d="M1 1H17A17 17 0 0 1 1 17Z" fill="#7fc24a" stroke="#000" strokeWidth="1.500" />
          <path d="M1 1H16L12 12Z" fill="#f0542c" />
          <path d="M1 1L13 12L6 16Z" fill="#f5d33a" />
          <path d="M0 41.500H324" stroke="#000" strokeOpacity="0.450" strokeWidth="2" />
          <path d="M0 43.500H324" stroke="#fff" strokeOpacity="0.650" strokeWidth="2" />
          <circle cx="0" cy="42.500" r="5" fill="#fff" stroke="#000" strokeWidth="2.600" />
          <circle cx="161" cy="42.500" r="5" fill="#fff" stroke="#000" strokeWidth="2.600" />
          <circle cx="322" cy="42.500" r="5" fill="#fff" stroke="#000" strokeWidth="2.600" />
        </svg>
        <span className={rightPort} />
      </section>
      <ListPanel
        place="left-[1535px] top-[3717px] w-[169px] h-[306px] text-[#222]"
        path="{0;0}"
        table="h-[287px]"
        idx="w-[28px]"
        head="pr-[18px]"
        rows={["0,128,0", "24,140,0", "88,172,0", "167,211,0", "231,243,0", "255,255,0", "255,231,0", "255,167,0", "255,88,0", "255,24,0", "255,0,0"]}
      />
    </main>
  );
}

const epwOutputs = [
  "readMe!",
  "latitude",
  "location",
  "dryBulbTemperature",
  "dewPointTemperature",
  "relativeHumidity",
  "windSpeed",
  "windDirection",
  "directNormalRadiation",
  "diffuseHorizontalRadiation",
  "globalHorizontalRadiation",
  "horizontalInfraredRadiation",
  "directNormalIlluminance",
  "diffuseHorizontalIlluminance",
  "globalHorizontalIlluminance",
  "totalSkyCover",
  "barometricPressure",
  "modelYear",
];

function InputList({ place }: { place: string }) {
  return <Node place={`w-[207px] ${place}`} body="h-[66px]" inWidth="w-[76px]" inputs={["_inputList"]} outputs={["numbers", "strings"]} icon={<InputListIcon />} />;
}
